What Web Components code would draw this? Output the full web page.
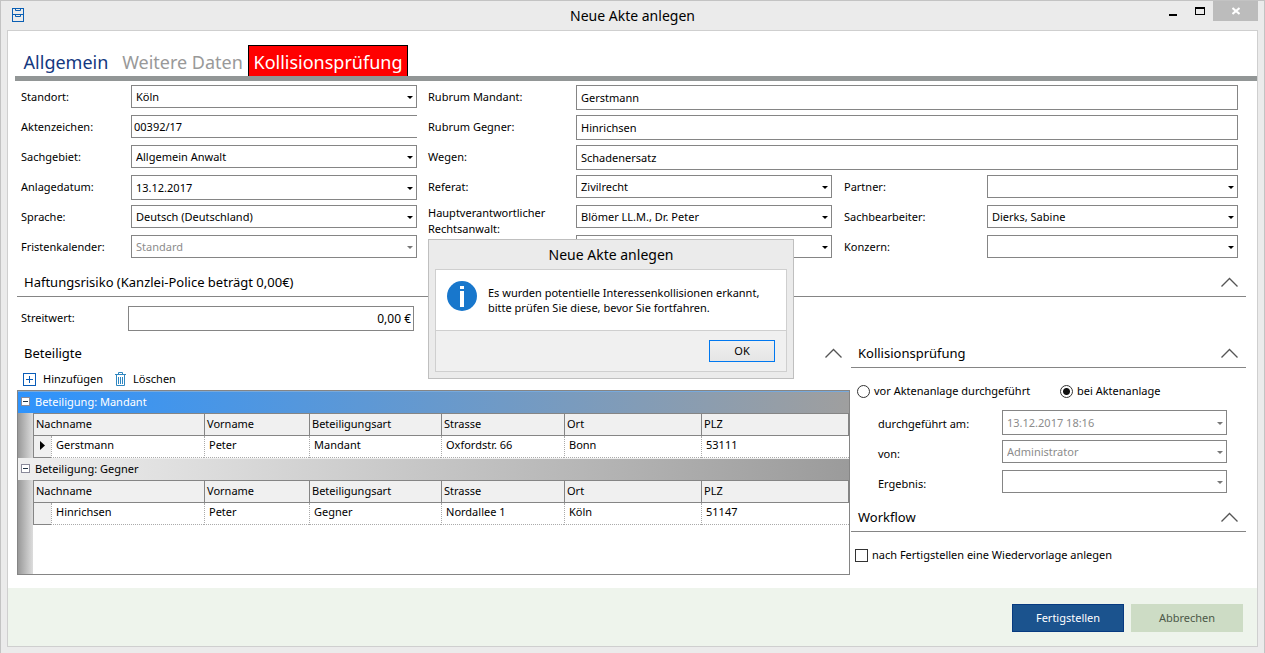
<!DOCTYPE html>
<html lang="de">
<head>
<meta charset="utf-8">
<title>Neue Akte anlegen</title>
<style>
  html, body { margin: 0; padding: 0; }
  body {
    --line: #858585;
    --frame: #ebebeb;
    font-family: "Noto Sans", "Open Sans", sans-serif;
    font-size: 11px;
    line-height: 16px;
    color: #000;
  }
</style>
</head>
<body>
<app-window heading="Neue Akte anlegen">
  <tab-bar slot="tabs"></tab-bar>
  <field-grid>
    <form-field label="Standort:" kind="select" value="Köln"></form-field>
    <form-field label="Rubrum Mandant:" kind="text" value="Gerstmann" wide></form-field>
    <form-field label="Aktenzeichen:" kind="open" value="00392/17"></form-field>
    <form-field label="Rubrum Gegner:" kind="text" value="Hinrichsen" wide></form-field>
    <form-field label="Sachgebiet:" kind="select" value="Allgemein Anwalt"></form-field>
    <form-field label="Wegen:" kind="text" value="Schadenersatz" wide></form-field>
    <form-field label="Anlagedatum:" kind="select" value="13.12.2017" tall></form-field>
    <form-field label="Referat:" kind="select" value="Zivilrecht"></form-field>
    <form-field label="Partner:" kind="select" value=""></form-field>
    <form-field label="Sprache:" kind="select" value="Deutsch (Deutschland)"></form-field>
    <form-field label="Hauptverantwortlicher Rechtsanwalt:" kind="select" value="Blömer LL.M., Dr. Peter" twoline></form-field>
    <form-field label="Sachbearbeiter:" kind="select" value="Dierks, Sabine"></form-field>
    <form-field label="Fristenkalender:" kind="select" value="Standard" disabled></form-field>
    <form-field label="" kind="select" value=""></form-field>
    <form-field label="Konzern:" kind="select" value=""></form-field>
  </field-grid>
  <liability-section>
    <section-head ruled>Haftungsrisiko (Kanzlei-Police beträgt 0,00€)</section-head>
  </liability-section>
  <split-view>
    <party-list slot="left">
      <party-group name="Beteiligung: Mandant" selected last-name="Gerstmann" first-name="Peter" role-name="Mandant" street="Oxfordstr. 66" city="Bonn" zip="53111"></party-group>
      <party-group name="Beteiligung: Gegner" last-name="Hinrichsen" first-name="Peter" role-name="Gegner" street="Nordallee 1" city="Köln" zip="51147"></party-group>
    </party-list>
    <conflict-check slot="right"></conflict-check>
  </split-view>
  <action-bar slot="footer"></action-bar>
</app-window>
<message-box heading="Neue Akte anlegen">Es wurden potentielle Interessenkollisionen erkannt,<br>bitte prüfen Sie diese, bevor Sie fortfahren.</message-box>

<script>
const RESET = `
  *, *::before, *::after { box-sizing: border-box; }
  button, input, select { font: inherit; color: inherit; margin: 0; border-radius: 0; }
  button { background: none; border: 0; padding: 0; }
`;
const define = (name, render, after) => customElements.define(name, class extends HTMLElement {
  connectedCallback() {
    if (this.shadowRoot) return;
    const tpl = document.createElement('template');
    const { css, html } = render(this);
    tpl.innerHTML = `<style>${RESET}${css}</style>${html}`;
    this.attachShadow({ mode: 'open' }).append(tpl.content.cloneNode(true));
    if (after) after(this);
  }
});

define('app-window', el => ({
  css: `
    :host { display: flex; flex-direction: column; min-height: 100vh; box-sizing: border-box;
      background: var(--frame); border: 1px solid #c3c3c3; border-bottom: 0; padding: 0 6px 6px; }
    header { display: grid; grid-template-columns: 1fr auto 1fr; height: 29px; }
    .logo { padding: 7px 0 0 5px; }
    h1 { margin: 0; font-size: 14px; font-weight: 400; line-height: 30px; }
    .controls { display: flex; justify-content: flex-end; align-items: flex-start; }
    .controls button { width: 27px; height: 20px; display: grid; place-items: center; }
    .controls .close { width: 45px; background: #bcbcbc; }
    svg { display: block; }
    main { flex: 1; display: flex; flex-direction: column; background: #fff; border: 1px solid #cfcfcf; }
  `,
  html: `
    <header>
      <div class="logo"><svg width="12" height="14" viewBox="0 0 12 14" fill="none" stroke="#0a5fb4">
        <rect x="0.5" y="0.5" width="11" height="13"/><path d="M0 6.5h12M3.5 1v1.5h5V1M3.5 7v1.5h5V7"/></svg></div>
      <h1>${el.getAttribute('heading')}</h1>
      <div class="controls">
        <button aria-label="Minimieren"><svg width="10" height="10"><path d="M1 9h8" stroke="#000" stroke-width="2"/></svg></button>
        <button aria-label="Maximieren"><svg width="10" height="8" fill="none"><rect x=".5" y=".5" width="9" height="7" stroke="#000"/><path d="M0 1h10" stroke="#000" stroke-width="2"/></svg></button>
        <button class="close" aria-label="Schließen"><svg width="8" height="8"><path d="M.5 1l7 6M7.5 1l-7 6" stroke="#fff" stroke-width="2"/></svg></button>
      </div>
    </header>
    <main><slot name="tabs"></slot><slot></slot><slot name="footer"></slot></main>`
}));

define('tab-bar', () => ({
  css: `
    :host { display: block; padding: 14px 0 0 7px; }
    nav { display: flex; border-bottom: 5px solid #929696; }
    a { height: 31px; line-height: 34px; font-size: 18px; text-decoration: none; color: #999;
      white-space: nowrap; text-align: center; }
    .first { width: 102px; color: #14387f; }
    .second { width: 131px; }
    .alert { width: 160px; background: #f00; color: #fff; border: 1px solid #000; border-bottom: 0; line-height: 32px; }
  `,
  html: `<nav><a class="first" href="#allgemein">Allgemein</a><a class="second" href="#weitere">Weitere Daten</a><a class="alert" href="#kollision">Kollisionsprüfung</a></nav>`
}));

define('field-grid', () => ({
  css: `:host { display: grid; grid-template-columns: 110px 286fr 159px 256fr 155px 251fr;
    grid-auto-rows: 30px; padding: 4px 19px 0 13px; }`,
  html: `<slot></slot>`
}));

const control = (kind, value, disabled) => {
  const d = disabled ? 'disabled' : '';
  return kind === 'select'
    ? `<span class="box select"><select id="c" ${d}><option>${value}</option></select></span>`
    : `<span class="box ${kind}"><input id="c" type="text" value="${value}" ${d}></span>`;
};
const CONTROL_CSS = `
  .box { display: block; position: relative; height: 23px; }
  .box.text, :host([tall]) .box { height: 25px; }
  .box input, .box select { display: block; width: 100%; height: 100%; padding: 0 4px; border: 1px solid var(--line);
    background: #fff; appearance: none; outline: 0; opacity: 1; }
  .box.open input { border-right: 0; padding-left: 2px; }
  .box :disabled { color: #8c8c8c; }
  .box.select::after { content: ""; position: absolute; right: 4px; top: 50%; margin-top: -1px;
    border: 3px solid transparent; border-top-color: #000; border-bottom: 0; pointer-events: none; }
  :host([disabled]) .box.select::after { border-top-color: #777; }
`;
// Labels of the second and third column pair start behind a gutter.
define('form-field', el => ({
  css: CONTROL_CSS + `
    :host { display: grid; grid-template-columns: subgrid; grid-column: span 2; align-items: start; }
    :host([wide]) { grid-column: span 4; }
    .box { grid-column: 2 / -1; }
    label { grid-column: 1; padding: 4px 20px 0 var(--pad, 0); }
    :host([twoline]) label { padding-top: 0; }
  `,
  html: `<label for="c">${el.getAttribute('label')}</label>` +
    control(el.getAttribute('kind'), el.getAttribute('value'), el.hasAttribute('disabled'))
}), el => {
  if (el.parentNode.localName !== 'field-grid') return;
  let col = 0;
  for (const p of el.parentNode.children) {
    if (p === el) break;
    col = (col + (p.hasAttribute('wide') ? 2 : 1)) % 3;
  }
  if (col > 0) el.style.setProperty('--pad', col === 1 ? '11px' : '12px');
});

define('section-head', () => ({
  css: `
    :host { display: flex; box-sizing: border-box; height: 32px; align-items: center; justify-content: space-between;
      padding: 3px 8px 0 7px; border-bottom: 1px solid transparent; }
    :host([ruled]) { border-bottom-color: var(--line); }
    h2 { margin: 0; font-size: 13px; font-weight: 400; line-height: 20px; }
    svg { display: block; }
  `,
  html: `<h2><slot></slot></h2><button aria-label="Einklappen"><svg width="17" height="10" fill="none"><path d="M.5 9.5l8-8 8 8" stroke="#555" stroke-width="1.3"/></svg></button>`
}));

define('liability-section', () => ({
  css: CONTROL_CSS + `
    :host { display: block; padding: 0 11px 0 9px; }
    .row { display: grid; grid-template-columns: 107px 286fr 832fr; height: 39px; padding: 9px 0 0 4px; }
    label { padding-top: 4px; }
    .box input { text-align: right; padding-right: 2px; font-size: 12px; }
  `,
  html: `<slot></slot><div class="row"><label for="c">Streitwert:</label>${control('text', '0,00 €')}</div>`
}));

define('split-view', () => ({
  css: `:host { flex: 1; display: grid; grid-template-columns: 833fr 395fr; column-gap: 1px; padding: 0 11px 13px 9px; }
    ::slotted(*) { min-width: 0; }`,
  html: `<slot name="left"></slot><slot name="right"></slot>`
}));

define('party-list', () => ({
  css: `
    :host { display: flex; flex-direction: column; }
    .tools { display: flex; height: 22px; align-items: center; padding-left: 6px; }
    .tools button { display: flex; align-items: center; gap: 7px; margin-right: 12px; }
    svg { display: block; }
    .grid { flex: 1; min-height: 180px; border: 1px solid var(--line);
      background: linear-gradient(90deg, #999, #ddd) left / 15px 100% no-repeat #fff; }
  `,
  html: `
    <section-head>Beteiligte</section-head>
    <div class="tools">
      <button><svg width="13" height="13" fill="none" stroke="#0a5cb8"><rect x=".5" y=".5" width="12" height="12"/><path d="M6.5 3v7M3 6.5h7"/></svg>Hinzufügen</button>
      <button><svg width="11" height="14" fill="none" stroke="#2e86c0"><path d="M0 2.5h11M3.5 2V.5h4V2M1.5 3v10.5h8V3M3.5 5v7M5.5 5v7M7.5 5v7"/></svg>Löschen</button>
    </div>
    <div class="grid"><slot></slot></div>`
}));

define('party-group', el => ({
  css: `
    :host { display: block; }
    .band { display: flex; align-items: center; gap: 5px; height: 22px; padding: 0 0 2px 3px; border-top: 1px solid #eee;
      background: linear-gradient(90deg, #efefef, #9b9b9b); }
    :host([selected]) .band { color: #fff; border-top-color: #77a9dc; background: linear-gradient(90deg, #2e93fc, #9f9f9f); }
    svg { display: block; }
    table { width: calc(100% - 15px); margin-left: 15px; table-layout: fixed; border-collapse: separate; border-spacing: 0; background: #fff; }
    th { height: 23px; padding: 0 0 2px 2px; font-weight: 400; text-align: left; background: #f0f0f0;
      border: solid var(--line); border-width: 1px 0 1px 1px; }
    th:last-child { border-right-width: 1px; }
    td { height: 22px; padding: 0 0 4px 4px; border: dotted #aaa; border-width: 0 0 1px 1px; }
    td:first-child { padding: 0 0 2px 6px; background: #f0f0f0; border: solid var(--line); border-width: 0 0 1px 1px; }
    .c0 { width: 18px } .c1 { width: 153px } .c2 { width: 105px } .c3 { width: 132px } .c4 { width: 123px } .c5 { width: 137px }
  `,
  html: `
    <div class="band"><svg width="9" height="9"><rect x=".5" y=".5" width="8" height="8" fill="#fff" stroke="#8a8a9a"/><path d="M2 4.5h5" stroke="#234"/></svg><span>${el.getAttribute('name')}</span></div>
    <table>
      <colgroup><col class="c0"><col class="c1"><col class="c2"><col class="c3"><col class="c4"><col class="c5"><col></colgroup>
      <thead><tr><th colspan="2">Nachname</th><th>Vorname</th><th>Beteiligungsart</th><th>Strasse</th><th>Ort</th><th>PLZ</th></tr></thead>
      <tbody><tr><td>${el.hasAttribute('selected') ? '<svg width="5" height="9"><path d="M0 0l5 4.5L0 9z"/></svg>' : ''}</td>
        ${['last-name', 'first-name', 'role-name', 'street', 'city', 'zip'].map(k => `<td>${el.getAttribute(k)}</td>`).join('')}</tr></tbody>
    </table>`
}));

define('check-option', el => ({
  css: `
    :host { display: block; }
    label { display: flex; align-items: center; gap: 4px; }
    input { appearance: none; width: 13px; height: 13px; border: 1px solid #333; background: #fff; }
    input[type=radio] { border-radius: 50%; }
    input[type=radio]:checked { background: radial-gradient(circle, #111 3px, #fff 4px); }
  `,
  html: `<label><input type="${el.getAttribute('type')}" ${el.hasAttribute('checked') ? 'checked' : ''}><span><slot></slot></span></label>`
}));

define('conflict-check', () => ({
  css: `
    :host { display: block; }
    .radios { display: grid; grid-template-columns: 203fr 186fr; align-items: center; height: 42px; padding: 4px 0 0 6px; }
    .fields { display: grid; grid-template-columns: 124px 1fr; grid-auto-rows: 30px; padding: 0 19px 0 27px; line-height: 20px; }
    .follow { display: flex; align-items: center; height: 43px; padding: 3px 0 0 4px; }
  `,
  html: `
    <section-head ruled>Kollisionsprüfung</section-head>
    <div class="radios">
      <check-option type="radio">vor Aktenanlage durchgeführt</check-option>
      <check-option type="radio" checked>bei Aktenanlage</check-option>
    </div>
    <div class="fields">
      <form-field label="durchgeführt am:" kind="select" value="13.12.2017 18:16" disabled tall></form-field>
      <form-field label="von:" kind="select" value="Administrator" disabled></form-field>
      <form-field label="Ergebnis:" kind="select" value="" disabled></form-field>
    </div>
    <section-head ruled>Workflow</section-head>
    <div class="follow"><check-option type="checkbox">nach Fertigstellen eine Wiedervorlage anlegen</check-option></div>`
}));

define('action-bar', () => ({
  css: `
    :host { display: flex; box-sizing: border-box; justify-content: flex-end; align-items: center; gap: 7px;
      height: 58px; padding: 2px 14px 0; background: #eef4ec; }
    button { width: 112px; height: 28px; }
    .primary { background: #1b538e; border: 1px solid #073a80; color: #fff; }
    .plain { background: #cddcc5; color: #4c5848; }
  `,
  html: `<button class="primary">Fertigstellen</button><button class="plain">Abbrechen</button>`
}));

define('message-box', el => ({
  css: `
    :host { position: absolute; left: 428px; top: 239px; width: 366px; box-sizing: border-box;
      background: var(--frame); border: 1px solid #bfbfbf; padding: 0 6px 6px; }
    h2 { margin: 0; font-size: 14px; font-weight: 400; line-height: 29px; text-align: center; }
    .body { border: 1px solid #cfcfcf; background: #fff; }
    .text { display: flex; gap: 10px; height: 60px; padding: 11px 11px 0; }
    p { margin: 0; padding-top: 4px; line-height: 15px; white-space: nowrap; }
    svg { display: block; }
    .buttons { display: flex; justify-content: flex-end; height: 41px; padding: 9px 11px; border-top: 1px solid #cfcfcf; background: #f0f0f0; }
    button { width: 66px; height: 22px; border: 1px solid #0078f0; background: linear-gradient(#f0f0f0, #e5e5e5); }
  `,
  html: `
    <section role="alertdialog" aria-labelledby="t"><h2 id="t">${el.getAttribute('heading')}</h2>
    <div class="body">
      <div class="text"><svg width="31" height="31" viewBox="0 0 31 31"><circle cx="15" cy="15" r="15" fill="#1877cc"/><path d="M13 5h4v3h-4zM13 10h4v16h-4z" fill="#fff"/></svg><p><slot></slot></p></div>
      <div class="buttons"><button>OK</button></div>
    </div></section>`
}));
</script>
</body>
</html>
